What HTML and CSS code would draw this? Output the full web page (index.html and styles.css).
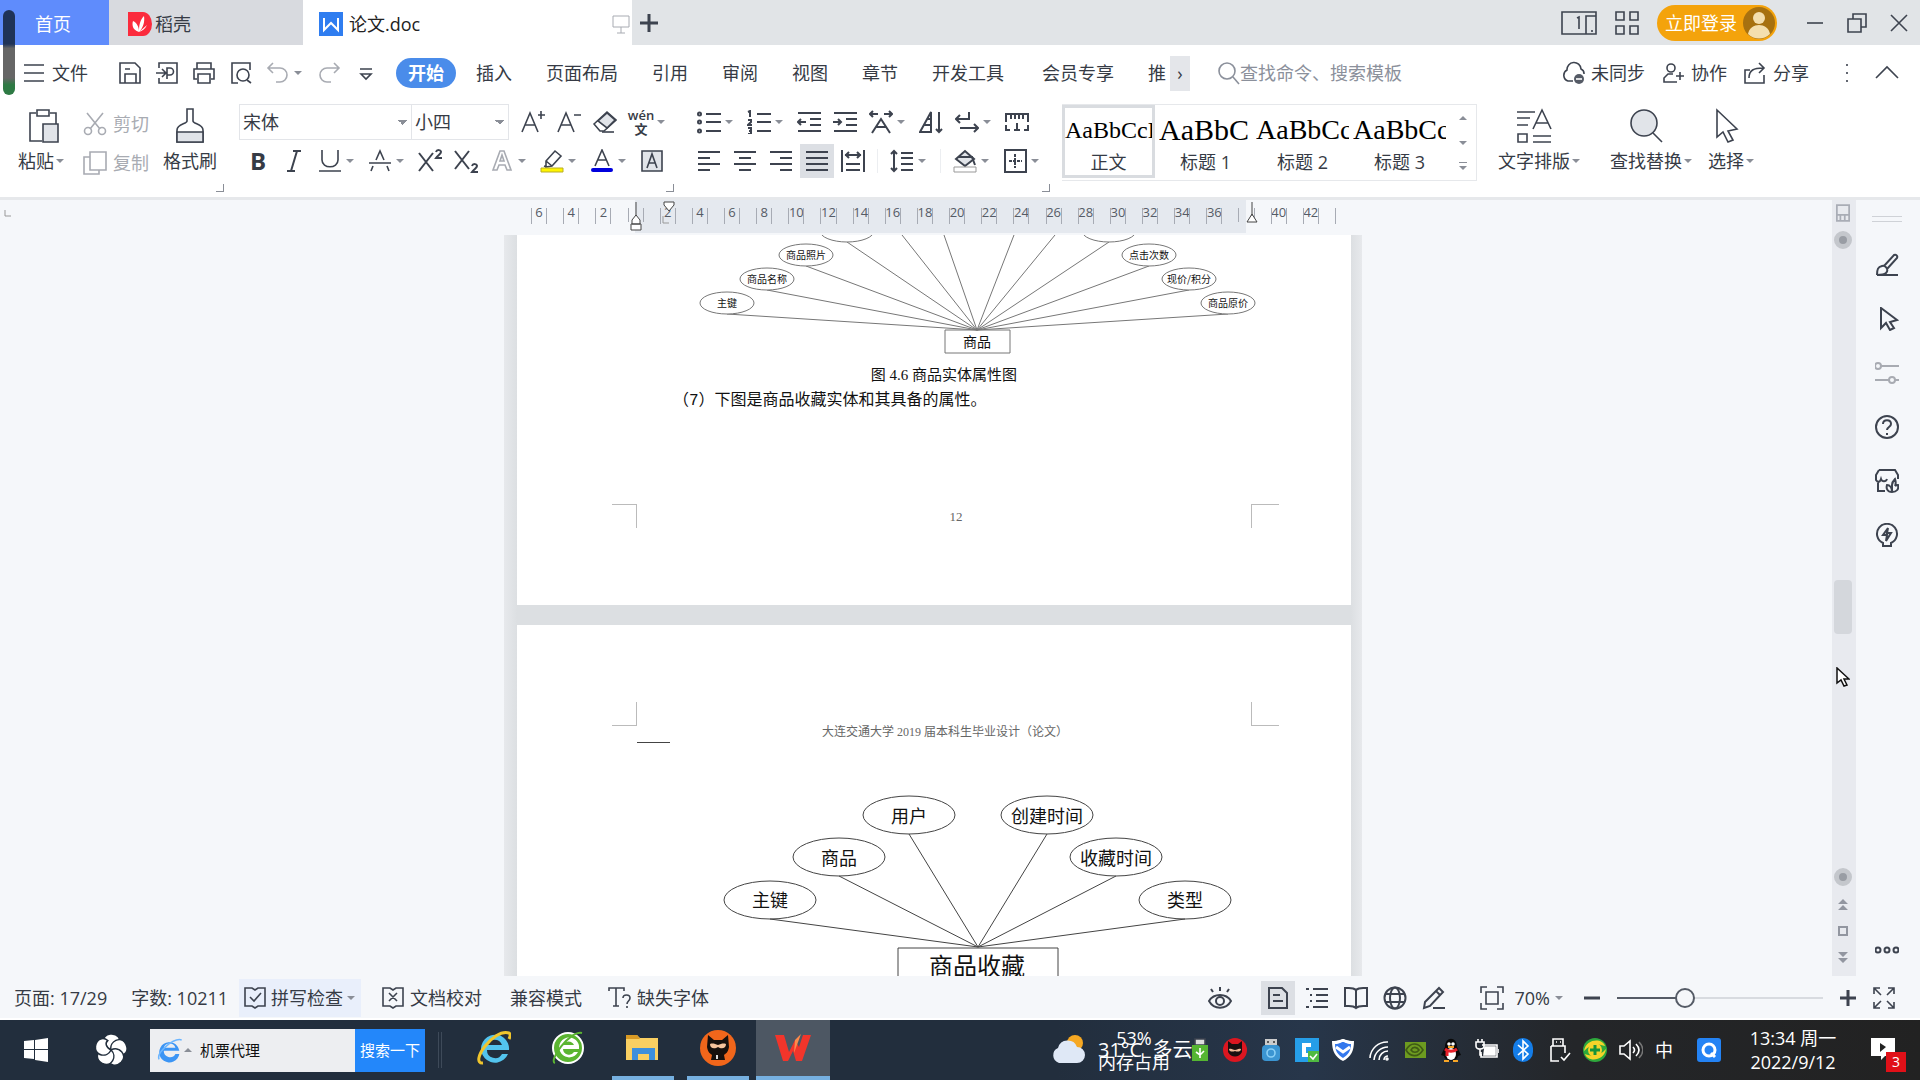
FILE: index.html
```html
<!DOCTYPE html>
<html lang="zh-CN">
<head>
<meta charset="utf-8">
<title>论文.doc</title>
<link rel="stylesheet" href="styles.css">
</head>
<body>
<svg class="sprite" aria-hidden="true">
  <symbol id="save" viewBox="0 0 24 24"><path d="M2 2h15l5 5v15H2zM7 22v-9h11v9M7 8h5"/></symbol>
  <symbol id="export" viewBox="0 0 24 24"><path d="M4 7V2h18v20H4v-5M1 12h9M7 8l4 4-4 4M12 18V7h3a3 3 0 0 1 0 7h-3"/></symbol>
  <symbol id="print" viewBox="0 0 24 24"><path d="M5 8V2h14v6M5 18H2V8h20v10h-3M6 13h12v9H6z"/></symbol>
  <symbol id="preview" viewBox="0 0 24 24"><path d="M9 22H3V2h18v7M18 19l4 3"/><circle cx="14" cy="14" r="6"/></symbol>
  <symbol id="undo" viewBox="0 0 24 24"><path d="M7 2L2 7l5 5M2 7h12a7 7 0 0 1 0 14h-4"/></symbol>
  <symbol id="redo" viewBox="0 0 24 24"><path d="M17 2l5 5-5 5M22 7H10a7 7 0 0 0 0 14h4"/></symbol>
  <symbol id="more" viewBox="0 0 24 24"><path d="M6 8h12M7 13l5 5 5-5z"/></symbol>
  <symbol id="search" viewBox="0 0 24 24"><circle cx="11" cy="10" r="8"/><path d="M17 16l6 7"/></symbol>
  <symbol id="cloud" viewBox="0 0 24 24"><path d="M12 20H7a6 6 0 0 1-1-11 7 7 0 0 1 14-1 5 5 0 0 1 3 5"/><circle cx="18" cy="18" r="5" fill="#555b66" stroke="none"/><path d="M15 18h6" stroke="#fff"/></symbol>
  <symbol id="person" viewBox="0 0 24 24"><circle cx="10" cy="7" r="4"/><path d="M16 21H3v-4l4-4h5M15 15h8M19 11v8"/></symbol>
  <symbol id="share" viewBox="0 0 24 24"><path d="M7 9H2v13h19v-8M6 17c0-8 5-10 14-10M16 2l5 5-5 5"/></symbol>
  <symbol id="paste" viewBox="0 0 36 36"><path d="M10 5H4v28h12M24 5h6v11M11 2h12v6H11z"/><path d="M17 16h15v18H17z" fill="#e1e4e9"/></symbol>
  <symbol id="cut" viewBox="0 0 24 24"><path d="M4 1l13 16M20 1L7 17"/><circle cx="5" cy="19" r="3.5"/><circle cx="19" cy="19" r="3.5"/></symbol>
  <symbol id="copy" viewBox="0 0 24 24"><path d="M7 1h16v18H7zM7 6H1v17h15v-4"/></symbol>
  <symbol id="brush" viewBox="0 0 36 36"><path d="M15 1h6v12c0 3 10 3 10 9v12H5V22c0-6 10-6 10-9z"/><path d="M5 24h26v10H5z" fill="#e1e4e9"/></symbol>
  <symbol id="grow" viewBox="0 0 24 24"><path d="M1 22L9 3l8 19M4 15h10M17 5h7M20 1v8"/></symbol>
  <symbol id="shrink" viewBox="0 0 24 24"><path d="M1 22L9 3l8 19M4 15h10M17 5h7"/></symbol>
  <symbol id="eraser" viewBox="0 0 24 24"><path d="M1 14L14 2l9 8-12 11H7z"/><path d="M5 11l9-8 8 7-8 8z" fill="#e1e4e9"/><path d="M9 22h12"/></symbol>
  <symbol id="strike" viewBox="0 0 24 24"><path d="M8 11l4-9 4 9M1 14h22M5 17l-2 5M19 17l2 5"/></symbol>
  <symbol id="hilite" viewBox="0 0 24 24"><path d="M6 12l9-10 6 5-9 10-6 1zM6 12l6 5M4 17l3 1"/><path d="M1 19h22v4H1z" fill="#fff500" stroke="#b9ad27" stroke-width="1"/></symbol>
  <symbol id="color" viewBox="0 0 24 24"><path d="M5 17L12 1l7 16M8 11h8"/><rect x="1" y="19" width="22" height="4" rx="2" fill="#00d" stroke="none"/></symbol>
  <symbol id="boxa" viewBox="0 0 24 24"><path d="M2 2h20v20H2z" fill="#e1e4e9"/><path d="M7 19l5-14 5 14M9 14h6"/></symbol>
  <symbol id="bullets" viewBox="0 0 24 24"><circle cx="2.500" cy="4" r="1.500"/><circle cx="2.500" cy="12" r="1.500"/><circle cx="2.500" cy="21" r="1.500"/><path d="M9 4h15M9 12h15M9 21h15"/></symbol>
  <symbol id="numbers" viewBox="0 0 24 24"><path d="M10 4h14M10 12h14M10 21h14M1 2l2-1v6M1 10h3v2l-3 3h4M1 18h3v6H1M2 21h2"/></symbol>
  <symbol id="outdent" viewBox="0 0 24 24"><path d="M1 3h23M13 9h11M13 15h11M1 21h23M9 12H1M4 9l-3 3 3 3"/></symbol>
  <symbol id="indent" viewBox="0 0 24 24"><path d="M1 3h23M13 9h11M13 15h11M1 21h23M0 12h8M5 9l3 3-3 3"/></symbol>
  <symbol id="scale" viewBox="0 0 24 24"><path d="M3 23l9-14 9 14M7 17h10M9 4H1M4 1L1 4l3 3M15 4h8M20 1l3 3-3 3"/></symbol>
  <symbol id="sort" viewBox="0 0 24 24"><path d="M1 22L12 2v20zM5 15h7M8 9h4M20 2v20M17 19l3 3 3-3"/></symbol>
  <symbol id="wrap" viewBox="0 0 24 24"><path d="M14 2v7H1M5 5L1 9l4 4M5 18h18M19 14l4 4-4 4"/></symbol>
  <symbol id="tabs" viewBox="0 0 24 24"><path d="M1 12V4h22v8M6 4v5M10 4v5M14 4v5M18 4v5M1 15v5h4M23 15v5h-4M12 13v7M9 20h6"/></symbol>
  <symbol id="left" viewBox="0 0 24 24"><path d="M1 3h22M1 9h12M1 15h22M1 21h12"/></symbol>
  <symbol id="center" viewBox="0 0 24 24"><path d="M1 3h22M6 9h12M1 15h22M6 21h12"/></symbol>
  <symbol id="right" viewBox="0 0 24 24"><path d="M1 3h22M11 9h12M1 15h22M11 21h12"/></symbol>
  <symbol id="justify" viewBox="0 0 24 24"><path d="M1 3h22M1 9h22M1 15h22M1 21h22"/></symbol>
  <symbol id="spread" viewBox="0 0 24 24"><path d="M1 1v22M23 1v22M5 15h14M5 21h14M4 6h16M8 3L5 6l3 3M16 3l3 3-3 3"/></symbol>
  <symbol id="spacing" viewBox="0 0 24 24"><path d="M4 2v20M1 5l3-3 3 3M1 19l3 3 3-3M11 4h12M11 9h12M11 15h12M11 21h12"/></symbol>
  <symbol id="fill" viewBox="0 0 24 24"><path d="M3 10l9-8 9 8-9 7z" fill="#e1e4e9"/><path d="M5 8h14l3 8"/><path d="M1 18h22v5H1z" stroke="#999" stroke-width="1"/></symbol>
  <symbol id="border" viewBox="0 0 24 24"><path d="M2 1h21v22H2z"/><path d="M12 5v14M6 12h13" stroke-dasharray="3 1"/></symbol>
  <symbol id="layout" viewBox="0 0 36 36"><path d="M1 4h18M1 10h13M1 17h11M17 21l9-19 9 19M20 15h12M2 26h9v8H2zM17 28h18M17 34h18"/></symbol>
  <symbol id="find" viewBox="0 0 36 36"><circle cx="16" cy="15" r="13" fill="#e1e4e9"/><path d="M25 25l9 9"/></symbol>
  <symbol id="pointer" viewBox="0 0 36 36"><path d="M9 2v27l6-5 5 10 5-2-5-9 9-2z"/></symbol>
  <symbol id="arrow24" viewBox="0 0 24 24"><path d="M6 1v20l5-5 4 7 4-2-4-6 7-2z"/></symbol>
  <symbol id="pen" viewBox="0 0 24 24"><path d="M9 13L19 2c2-1 4 1 3 3L12 16M2 22c0-6 1-8 5-9s7 4 4 7c-2 2-5 2-9 2h21"/></symbol>
  <symbol id="sliders" viewBox="0 0 24 24"><circle cx="3" cy="5" r="3"/><path d="M6 5h18M0 19h14M20 19h4"/><circle cx="17" cy="19" r="3"/></symbol>
  <symbol id="help" viewBox="0 0 24 24"><circle cx="12" cy="12" r="11"/><path d="M8 9c0-5 8-5 8 0 0 3-4 3-4 6M12 18v2"/></symbol>
  <symbol id="shop" viewBox="0 0 24 24"><path d="M4 1h16l3 5v4M4 1L1 6v5c2 3 4 2 5-1 1 3 5 3 6 0M3 13v9h7"/><path d="M17 23c-5 0-6-4-5-7 3 0 5 3 5 7 0-3 0-5 0-7 0-3 2-5 3-6 1 3 1 5 0 7 1-1 2-1 3-1 1 4-1 7-6 7"/></symbol>
  <symbol id="idea" viewBox="0 0 24 24"><path d="M8 20a10 10 0 1 1 8 0v3H8zM13 5l-5 7h4l-1 6 5-8h-4z"/></symbol>
  <symbol id="spell" viewBox="0 0 24 24"><path d="M2 2h7l3 2 3-2h7v18h-7l-3 2-3-2H2zM7 11l4 4 7-8"/></symbol>
  <symbol id="proof" viewBox="0 0 24 24"><path d="M2 2h7l3 2 3-2h7v18h-7l-3 2-3-2H2zM8 7l8 8M16 7l-8 8"/></symbol>
  <symbol id="missing" viewBox="0 0 24 24"><path d="M1 5V2h15v3M8 2v18M5 20h6M15 12c0-4 7-4 7 0 0 3-3 3-3 6M19 20v2"/></symbol>
  <symbol id="eye" viewBox="0 0 24 24"><path d="M1 15c5-8 17-8 22 0-5 9-17 9-22 0zM12 5V1M5 6L3 3M19 6l2-3"/><circle cx="12" cy="15" r="4"/></symbol>
  <symbol id="pageview" viewBox="0 0 24 24"><path d="M3 2h13l5 5v15H3zM7 9h7M7 15h10"/></symbol>
  <symbol id="outline" viewBox="0 0 24 24"><path d="M1 3h3M8 3h15M5 9h2M11 9h12M5 15h2M11 15h12M1 21h3M8 21h15"/></symbol>
  <symbol id="book" viewBox="0 0 24 24"><path d="M12 4C9 1 5 2 1 2v18c4 0 8-1 11 2 3-3 7-2 11-2V2c-4 0-8-1-11 2v18"/></symbol>
  <symbol id="globe" viewBox="0 0 24 24"><circle cx="12" cy="12" r="10.500"/><ellipse cx="12" cy="12" rx="5" ry="10.500"/><path d="M2 8h20M2 16h20"/></symbol>
  <symbol id="pencil" viewBox="0 0 24 24"><path d="M3 16L17 2l4 4L8 20l-6 2zM14 5l4 4M11 22h12"/></symbol>
  <symbol id="fit" viewBox="0 0 24 24"><path d="M1 7V1h6M17 1h6v6M23 17v6h-6M7 23H1v-6M6 6h12v12H6z"/></symbol>
  <symbol id="full" viewBox="0 0 24 24"><path d="M2 8V2h6M2 2l7 7M16 2h6v6M22 2l-7 7M22 16v6h-6M22 22l-7-7M8 22H2v-6M2 22l7-7"/></symbol>
  <symbol id="petal" viewBox="0 0 34 34"><path d="M17 17C8 16 6 3 16 1c8-1 11 5 9 10-3-2-7 0-8 6z" fill="#fff" stroke="#222e3c" stroke-width="1.500"/></symbol>
</svg>

<header class="titlebar">
  <button class="tab home">首页</button>
  <button class="tab docer"><svg class="ic" viewBox="0 0 24 24"><path d="M0 0h15a9 12 0 0 1 0 24H0z" fill="#fb2b3d" stroke="none"/><path d="M11 20C4 18 4 12 5 9c4 2 6 6 6 11 0-7 1-12 5-16 1 6-1 12-5 16 3-1 6-3 8-7" fill="#fff" stroke="none"/></svg>稻壳</button>
  <div class="tab doc"><svg class="ic" viewBox="0 0 24 24"><path d="M0 0h24v24H0z" fill="#2f7df0" stroke="none"/><path d="M5 6v12l7-7 7 7V6" stroke="#fff"/></svg><span>论文.doc</span><svg class="ic pale screen" viewBox="0 0 24 24"><path d="M5 4h16v11H5zM13 15v6M9 21h8"/></svg></div>
  <button class="addtab" aria-label="新建"><svg class="ic bold" viewBox="0 0 24 24"><path d="M12 3v18M3 12h18"/></svg></button>
  <div class="titletools">
    <svg class="ic wide" viewBox="0 0 36 24"><path d="M1 1h34v22H1zM25 23V5h10M16 7l2-1v12M31 19v2"/></svg>
    <svg class="ic" viewBox="0 0 24 24"><path d="M1 1h8v8H1zM15 1h8v8h-8zM1 15h8v8H1zM15 15h8v8h-8z"/></svg>
    <button class="login">立即登录<svg class="avatar" viewBox="0 0 32 32"><circle cx="16" cy="16" r="16" fill="#a77110"/><circle cx="16" cy="11" r="6" fill="#f4dfae"/><path d="M5 27c2-12 20-12 22 0-6 6-16 6-22 0z" fill="#f4dfae"/></svg></button>
  </div>
  <div class="wincontrols">
    <svg class="ic" viewBox="0 0 24 24"><path d="M4 12h16"/></svg>
    <svg class="ic" viewBox="0 0 24 24"><path d="M3 8h13v13H3zM8 8V3h13v13h-5"/></svg>
    <svg class="ic" viewBox="0 0 24 24"><path d="M4 4l16 16M20 4L4 20"/></svg>
  </div>
</header>

<nav class="menubar">
  <button class="filemenu"><svg class="ic" viewBox="0 0 24 24"><path d="M2 4h20M2 12h20M2 20h20"/></svg>文件</button>
  <div class="quick">
    <svg class="ic"><use href="#save"/></svg><svg class="ic"><use href="#export"/></svg><svg class="ic"><use href="#print"/></svg><svg class="ic"><use href="#preview"/></svg>
    <button class="dd pale"><svg class="ic"><use href="#undo"/></svg></button>
    <svg class="ic pale"><use href="#redo"/></svg><svg class="ic"><use href="#more"/></svg>
  </div>
  <button class="pill">开始</button>
  <div class="menus">
    <button>插入</button><button>页面布局</button><button>引用</button><button>审阅</button><button>视图</button><button>章节</button><button class="dev">开发工具</button><button class="member">会员专享</button><button>推</button>
  </div>
  <button class="chev">›</button>
  <label class="find"><svg class="ic"><use href="#search"/></svg><input placeholder="查找命令、搜索模板"></label>
  <div class="cloudtools">
    <button><svg class="ic"><use href="#cloud"/></svg>未同步</button>
    <button><svg class="ic"><use href="#person"/></svg>协作</button>
    <button><svg class="ic"><use href="#share"/></svg>分享</button>
  </div>
  <svg class="ic dots" viewBox="0 0 24 24"><path d="M12 3v2M12 11v2M12 19v2"/></svg>
  <svg class="ic" viewBox="0 0 24 24"><path d="M1 17L12 6l11 11"/></svg>
</nav>

<section class="ribbon">
  <div class="group clip">
    <button class="big"><svg class="ic36"><use href="#paste"/></svg><span class="cap more">粘贴</span></button>
    <div class="stack pale"><button><svg class="ic"><use href="#cut"/></svg>剪切</button><button><svg class="ic"><use href="#copy"/></svg>复制</button></div>
    <button class="big"><svg class="ic36"><use href="#brush"/></svg><span class="cap">格式刷</span></button>
  </div>
  <div class="group fontgroup">
    <div class="row">
      <div class="combo"><select class="family" aria-label="字体"><option>宋体</option></select><select class="size" aria-label="字号"><option>小四</option></select></div>
      <svg class="ic"><use href="#grow"/></svg><svg class="ic"><use href="#shrink"/></svg><svg class="ic"><use href="#eraser"/></svg>
      <button class="dd"><span class="wen"><i>wén</i><i>文</i></span></button>
    </div>
    <div class="row tools">
      <button class="glyph b">B</button><button class="glyph"><svg class="ic" viewBox="0 0 24 24"><path d="M11 2h8M5 22h8M15 2L9 22"/></svg></button>
      <button class="dd"><svg class="ic" viewBox="0 0 24 24"><path d="M4 1v10c0 9 16 9 16 0V1M1 22h22"/></svg></button>
      <button class="dd"><svg class="ic"><use href="#strike"/></svg></button>
      <button class="glyph" aria-label="上标"><svg class="ic" viewBox="0 0 24 24"><path d="M1 4l14 18M15 4L1 22M18 3c1-3 5-2 5 0s-3 3-5 6h6"/></svg></button>
      <button class="glyph" aria-label="下标"><svg class="ic" viewBox="0 0 24 24"><path d="M1 2l14 18M15 2L1 20M18 17c1-3 5-2 5 0s-3 3-5 6h6"/></svg></button>
      <button class="dd pale"><svg class="ic" viewBox="0 0 24 24"><path d="M3 21L10 2h4l7 19h-4l-2-5H9l-2 5zM10 12h4l-2-6z"/></svg></button>
      <button class="dd"><svg class="ic"><use href="#hilite"/></svg></button>
      <button class="dd"><svg class="ic"><use href="#color"/></svg></button>
      <svg class="ic"><use href="#boxa"/></svg>
    </div>
  </div>
  <div class="group para">
    <div class="row">
      <button class="dd"><svg class="ic"><use href="#bullets"/></svg></button><button class="dd"><svg class="ic"><use href="#numbers"/></svg></button>
      <svg class="ic"><use href="#outdent"/></svg><svg class="ic"><use href="#indent"/></svg>
      <button class="dd"><svg class="ic"><use href="#scale"/></svg></button><svg class="ic"><use href="#sort"/></svg>
      <button class="dd"><svg class="ic"><use href="#wrap"/></svg></button><svg class="ic"><use href="#tabs"/></svg>
    </div>
    <div class="row">
      <svg class="ic"><use href="#left"/></svg><svg class="ic"><use href="#center"/></svg><svg class="ic"><use href="#right"/></svg>
      <svg class="ic on"><use href="#justify"/></svg><svg class="ic"><use href="#spread"/></svg>
      <span class="sep"></span><button class="dd"><svg class="ic"><use href="#spacing"/></svg></button>
      <span class="sep"></span><button class="dd"><svg class="ic"><use href="#fill"/></svg></button>
      <button class="dd"><svg class="ic"><use href="#border"/></svg></button>
    </div>
  </div>
  <div class="gallery">
    <button class="style sel"><span class="sample">AaBbCcD</span>正文</button>
    <button class="style"><span class="sample h1">AaBbC</span>标题 1</button>
    <button class="style"><span class="sample h2">AaBbCc</span>标题 2</button>
    <button class="style"><span class="sample h2">AaBbCc</span>标题 3</button>
    <div class="galscroll"><i class="up"></i><i class="dn"></i><i class="dn line"></i></div>
  </div>
  <button class="big typeset"><svg class="ic36"><use href="#layout"/></svg><span class="cap more">文字排版</span></button>
  <button class="big replace"><svg class="ic36"><use href="#find"/></svg><span class="cap more">查找替换</span></button>
  <button class="big choose"><svg class="ic36"><use href="#pointer"/></svg><span class="cap more">选择</span></button>
</section>

<main class="workspace">
  <svg class="corner" viewBox="0 0 8 8"><path d="M1 0v6h6" fill="none" stroke="#999"/></svg>
  <div class="canvas">
    <div class="ruler">
      <span>6</span><span>4</span><span>2</span><span class="mark"></span><span class="in">2</span><span class="in">4</span><span class="in">6</span><span class="in">8</span><span class="in">10</span><span class="in">12</span><span class="in">14</span><span class="in">16</span><span class="in">18</span><span class="in">20</span><span class="in">22</span><span class="in">24</span><span class="in">26</span><span class="in">28</span><span class="in">30</span><span class="in">32</span><span class="in">34</span><span class="in">36</span><span class="mark"></span><span>40</span><span>42</span>
      <svg class="stops" viewBox="523 200 814 35"><path d="M636 202v14M632 220l4-5 4 5v4h-8zM631 224h10v6h-10zM1252 202v14M1247 222l5-8 5 8zM664 202h10v3l-5 6-5-6z" fill="#fff" stroke="#444"/><path d="M663 216v7h6" fill="none" stroke="#999"/><path d="M1335.500 208v16" stroke="#a7abb4"/></svg>
    </div>
    <div class="pages">
      <article class="page first">
        <svg class="diagram small" viewBox="517 235 834 120">
          <path d="M727 314L977 330 767 290M806 266L977 330 847 242M902 235L977 330 944 235M1014 235L977 330 1055 235M1109 242L977 330 1149 266M1189 290L977 330 1228 314M945 330h65v23h-65z"/>
          <g><ellipse cx="727" cy="303" rx="27" ry="11"/><ellipse cx="767" cy="279" rx="27" ry="11"/><ellipse cx="806" cy="255" rx="27" ry="11"/><ellipse cx="847" cy="231" rx="27" ry="11"/><ellipse cx="1109" cy="231" rx="27" ry="11"/><ellipse cx="1149" cy="255" rx="27" ry="11"/><ellipse cx="1189" cy="279" rx="27" ry="11"/><ellipse cx="1228" cy="303" rx="27" ry="11"/></g>
          <text x="727" y="307">主键</text><text x="767" y="283">商品名称</text><text x="806" y="259">商品照片</text><text x="1149" y="259">点击次数</text><text x="1189" y="283">现价/积分</text><text x="1228" y="307">商品原价</text><text class="root" x="977" y="347">商品</text>
        </svg>
        <p class="figcap">图 4.6 商品实体属性图</p>
        <p class="para-text">（7）下图是商品收藏实体和其具备的属性。</p>
        <footer class="margins bottom"><i></i><span>12</span><i></i></footer>
      </article>
      <article class="page">
        <div class="margins top"><i></i><i></i></div>
        <p class="pagehead">大连交通大学 2019 届本科生毕业设计（论文）</p>
        <hr class="note">
        <svg class="diagram" viewBox="517 743 834 300">
          <path d="M770 919L978 947 839 876M909 834L978 947 1047 834M1116 876L978 947 1185 919M898 948h160v60h-160z"/>
          <ellipse cx="909" cy="815" rx="46" ry="19"/><ellipse cx="1047" cy="815" rx="46" ry="19"/><ellipse cx="839" cy="857" rx="46" ry="19"/><ellipse cx="1116" cy="857" rx="46" ry="19"/><ellipse cx="770" cy="900" rx="46" ry="19"/><ellipse cx="1185" cy="900" rx="46" ry="19"/>
          <text x="909" y="823">用户</text><text x="1047" y="823">创建时间</text><text x="839" y="865">商品</text><text x="1116" y="865">收藏时间</text><text x="770" y="907">主键</text><text x="1185" y="907">类型</text><text class="root" x="977" y="975">商品收藏</text>
        </svg>
      </article>
    </div>
  </div>
  <div class="vscroll">
    <svg class="rulertoggle" viewBox="0 0 16 20"><path d="M1 1h14v18H1zM1 12h14M5 12v7M10 12v7" fill="none" stroke="#a9adb6" stroke-width="2"/></svg>
    <i class="knob"></i><i class="thumb"></i>
    <svg class="mouse" viewBox="0 0 14 20"><path d="M1 1v15l4-3 3 6 3-1-3-6h5z" fill="#fff" stroke="#111" stroke-width="1.500"/></svg>
    <i class="knob low"></i>
    <svg class="pager" viewBox="0 0 14 70"><path d="M2 10l5-5 5 5zM2 16l5-5 5 5zM2 58l5 5 5-5zM2 64l5 5 5-5z" fill="#9296a0"/><path d="M3 33h8v8H3z" fill="none" stroke="#9296a0" stroke-width="2"/></svg>
  </div>
  <aside class="side">
    <i class="grip"></i>
    <svg class="ic"><use href="#pen"/></svg><svg class="ic"><use href="#arrow24"/></svg><svg class="ic pale"><use href="#sliders"/></svg><svg class="ic"><use href="#help"/></svg><svg class="ic"><use href="#shop"/></svg><svg class="ic"><use href="#idea"/></svg>
    <svg class="ic last" viewBox="0 0 24 24"><circle cx="3" cy="12" r="2.500"/><circle cx="12" cy="12" r="2.500"/><circle cx="21" cy="12" r="2.500"/></svg>
  </aside>
</main>

<footer class="status">
  <span class="pageno">页面: 17/29</span><span class="words">字数: 10211</span>
  <button class="dd spellbtn"><svg class="ic"><use href="#spell"/></svg>拼写检查</button>
  <button class="proofbtn"><svg class="ic"><use href="#proof"/></svg>文档校对</button>
  <span class="compat">兼容模式</span>
  <button class="missbtn"><svg class="ic"><use href="#missing"/></svg>缺失字体</button>
  <div class="views">
    <svg class="ic eye"><use href="#eye"/></svg><svg class="ic on"><use href="#pageview"/></svg><svg class="ic"><use href="#outline"/></svg><svg class="ic"><use href="#book"/></svg><svg class="ic"><use href="#globe"/></svg><svg class="ic"><use href="#pencil"/></svg>
  </div>
  <svg class="ic"><use href="#fit"/></svg>
  <button class="dd zoomval">70%</button>
  <div class="zoom"><svg class="ic bold" viewBox="0 0 24 24"><path d="M4 12h16"/></svg><input type="range" min="0" max="100" value="31" aria-label="缩放"><svg class="ic bold" viewBox="0 0 24 24"><path d="M4 12h16M12 4v16"/></svg></div>
  <svg class="ic"><use href="#full"/></svg>
</footer>

<div class="taskbar">
  <svg class="ic start" viewBox="0 0 24 24"><path d="M0 3l10-1v9H0zM11 2l13-2v11H11zM0 12h10v9L0 20zM11 12h13v12l-13-2z" fill="#fff" stroke="none"/></svg>
  <svg class="flower" viewBox="0 0 34 34"><use href="#petal"/><use href="#petal" transform="rotate(72 17 17)"/><use href="#petal" transform="rotate(144 17 17)"/><use href="#petal" transform="rotate(216 17 17)"/><use href="#petal" transform="rotate(288 17 17)"/></svg>
  <div class="seek"><svg class="ie" viewBox="0 0 36 36"><path d="M30 19H10a8 8 0 0 0 15 4h5a13 13 0 1 1 0-4zM10 15h15a8 8 0 0 0-15 0z" fill="#3c95f5"/><path d="M4 30C0 22 22 2 33 5" fill="none" stroke="#6bb5ff" stroke-width="2"/></svg><i class="up"></i><input aria-label="搜索" value="机票代理"><button>搜索一下</button></div>
  <i class="split"></i>
  <div class="apps">
    <span><svg class="ie" viewBox="0 0 36 36"><path d="M34 20H12a8 8 0 0 0 15 4h6a14 14 0 1 1 1-4zM12 15h15a8 8 0 0 0-15 0z" fill="#53c4ee"/><path d="M8 33C-6 34 18-2 34 3c2 1 1 4 0 6" fill="none" stroke="#f0c52c" stroke-width="3"/></svg></span>
    <span><svg class="ie" viewBox="0 0 36 36"><circle cx="18" cy="18" r="15" fill="#5bb531" stroke="#fff" stroke-width="2"/><path d="M29 19H13a6 6 0 0 0 11 3h4a10 10 0 1 1 1-3zM13 15h11a6 6 0 0 0-11 0z" fill="#fff"/><path d="M5 33C-2 31 20 0 32 3" fill="none" stroke="#5bb531" stroke-width="2"/></svg></span>
    <span class="open"><svg class="ie" viewBox="0 0 36 36"><path d="M1 5h11l3 3h18v22H1z" fill="#f9cf62"/><path d="M1 5h11l3 4H1z" fill="#d99a24"/><path d="M7 30V18h23v12h-6v-6H13v6z" fill="#3d8fdc"/></svg></span>
    <span class="open"><svg class="ie" viewBox="0 0 36 36"><circle cx="18" cy="18" r="18" fill="#f1661b"/><path d="M8 5l6 5h8l6-5 1 12c-1 6-4 7-5 8l1 5H11l1-5c-1-1-4-2-5-8z" fill="#17100d"/><path d="M10 14c3-1 5 0 8 1 3-1 5-2 8-1 0 5-5 5-8 3-3 2-8 2-8-3z" fill="#f5c39c"/><path d="M17 25v4" stroke="#ddd" stroke-width="2"/></svg></span>
    <span class="open active"><svg class="ie" viewBox="0 0 36 36"><path d="M0 5h9l5 17 6-12 4 7 4-12h8l-9 26h-6l-3-10-5 10H8z" fill="#f2352b"/><path d="M20 10l6-6-7 19z" fill="#ff8a4a"/></svg></span>
  </div>
  <div class="weather"><svg viewBox="0 0 34 34"><circle cx="24" cy="10" r="8" fill="#f6a823"/><path d="M8 30a8 8 0 0 1-1-15 10 10 0 0 1 19-1 8 8 0 0 1 0 16z" fill="#dfe8f6"/></svg>
    <div class="overlay"><span class="temp">31°C&nbsp; 多云</span><span class="mem">53%<br>内存占用</span></div></div>
  <div class="tray">
    <svg class="ic" viewBox="0 0 24 24"><path d="M8 1h10v6H8z" fill="#ddd"/><path d="M5 7h16v16H5z" fill="#55b532" stroke="none"/><path d="M13 10v10M9 14l4 3 4-4" stroke="#fff"/></svg>
    <svg class="ic" viewBox="0 0 24 24"><circle cx="12" cy="12" r="12" fill="#dc1620" stroke="none"/><path d="M5 3l4 3h6l4-3v11c-3 6-11 6-14 0z" fill="#1a1010" stroke="none"/><path d="M6 11c3-1 4 1 6 1s3-2 6-1c0 3-4 3-6 2-2 1-6 1-6-2z" fill="#f3bb98" stroke="none"/></svg>
    <svg class="ic" viewBox="0 0 24 24"><path d="M6 1h12v6H6z" fill="#ccc" stroke="none"/><rect x="3" y="7" width="18" height="16" rx="4" fill="#3b95d2" stroke="none"/><path d="M8 4h2M14 4h2" stroke="#333"/><circle cx="12" cy="15" r="4" stroke="#8bd0f6"/></svg>
    <svg class="ic" viewBox="0 0 24 24"><path d="M0 0h24v24H0z" fill="#269ee8" stroke="none"/><path d="M16 7H9v10h7" stroke="#fff" stroke-width="4"/><path d="M13 13h11v11H13z" fill="#4fba41" stroke="none"/><path d="M15 18l3 3 4-5" stroke="#fff"/></svg>
    <svg class="ic" viewBox="0 0 24 24"><path d="M1 3c7 0 9-2 11-2s4 2 11 2c0 10-3 16-11 20C4 19 1 13 1 3z" fill="#fff" stroke="none"/><path d="M4 6c5 0 6-2 8-2s3 2 8 2c0 7-3 11-8 14-5-3-8-7-8-14z" fill="#3478ed" stroke="none"/><path d="M5 9l7 5 7-5" stroke="#fff" stroke-width="3"/></svg>
    <svg class="ic lite" viewBox="0 0 24 24"><path d="M3 20A17 17 0 0 1 21 4M7 22A14 14 0 0 1 21 9M12 22a9 9 0 0 1 9-9M17 22a4 4 0 0 1 4-4"/><circle cx="20" cy="21" r="1"/></svg>
    <svg class="ic" viewBox="0 0 24 24"><path d="M2 4h21v16H2z" fill="#6d9b20" stroke="none"/><path d="M3 12c5-9 13-7 17 0-5 8-13 7-17 0zM8 12c2-4 6-3 8 0-2 3-6 3-8 0z" stroke="#3f5a14"/></svg>
    <svg class="ic" viewBox="0 0 24 24"><path d="M6 9c0-11 12-11 12 0l4 8-3 1c-1 6-13 6-14 0l-3-1z" fill="#090909" stroke="none"/><ellipse cx="12" cy="16" rx="5" ry="6" fill="#fff" stroke="none"/><path d="M6 11c4 3 8 3 12 0M8 13v5" stroke="#e6202a" stroke-width="3"/><circle cx="10" cy="6" r="1" fill="#fff" stroke="#fff"/><circle cx="14" cy="6" r="1" fill="#fff" stroke="#fff"/><path d="M5 23h5M14 23h5M9 9h6" stroke="#f7a526" stroke-width="2"/></svg>
    <svg class="ic lite" viewBox="0 0 24 24"><path d="M7 7h15v12H6v-5" /><path d="M10 9h10v8H9z" fill="#fff"/><path d="M24 11v4M1 4h8v4c0 4-8 4-8 0zM3 4V1M7 4V1M5 11v6h2"/></svg>
    <svg class="ic" viewBox="0 0 24 24"><rect x="2" width="20" height="24" rx="10" fill="#147de8" stroke="none"/><path d="M7 7l10 9-5 5V3l5 5-10 9" stroke="#fff"/></svg>
    <svg class="ic lite" viewBox="0 0 24 24"><path d="M6 1h10v7H6zM4 8h14v7M4 8v15h8M14 19l3 3 6-7M9 4h1M13 4h1"/></svg>
    <svg class="ic" viewBox="0 0 24 24"><circle cx="12" cy="12" r="12" fill="#2ea83c" stroke="none"/><path d="M1 13C3 0 20 0 22 8c-8-3-15-2-21 5zM23 11c-2 13-19 13-21 5 8 3 15 2 21-5z" fill="#f5d32a" stroke="none"/><circle cx="12" cy="12" r="7" fill="#f5d32a" stroke="none"/><path d="M12 7v10M7 12h10" stroke="#16933a" stroke-width="3"/></svg>
    <svg class="ic lite" viewBox="0 0 24 24"><path d="M1 8h4l6-5v18l-6-5H1zM14 9c2 2 2 4 0 6M17 6c4 4 4 8 0 12"/><path d="M20 4c5 5 5 11 0 16" stroke="#777"/></svg>
    <span class="ime">中</span>
  </div>
  <svg class="ic qapp" viewBox="0 0 24 24"><rect width="24" height="24" rx="3" fill="#2483f4" stroke="none"/><circle cx="12" cy="12" r="6" stroke="#fff" stroke-width="3"/><path d="M14 15l4 4" stroke="#fff" stroke-width="3"/></svg>
  <div class="clock">13:34 周一<br>2022/9/12</div>
  <div class="notify"><svg viewBox="0 0 26 24"><path d="M1 1h24v18H15l-4 4v-4H1z" fill="#fff"/><path d="M10 6l6 4-6 5z" fill="#222"/></svg><b>3</b></div>
</div>
<div class="handle"></div>
</body>
</html>
```
FILE: styles.css
```css
* { box-sizing: border-box; }
body {
  margin: 0; height: 100vh; display: flex; flex-direction: column; overflow: hidden;
  font: 18px/24px "Open Sans", "Noto Sans CJK SC", sans-serif; color: #363b45; background: #f5f7fa;
}
button, input, select { font: inherit; color: inherit; border: 0; background: none; padding: 0; margin: 0; white-space: nowrap; }
p { margin: 0; }
svg { flex: none; display: block; }
.sprite { position: absolute; width: 0; height: 0; }
.ic { width: 24px; height: 24px; }
.ic36 { width: 36px; height: 36px; }
.ic, .ic36 { fill: none; stroke: #3d434f; stroke-width: 1.6; }
.pale, .pale .ic { color: #a8abb2; stroke: #a8abb2; }
.ic.bold { stroke-width: 3; }
.wide { width: 36px; }
.dd { display: flex; align-items: center; gap: 4px; }
.dd::after, .more::after {
  content: ""; border: 4px solid transparent; border-top-color: #8a8e97; border-bottom: 0; margin-right: 2px;
}

/* title bar */
.titlebar { display: flex; height: 45px; background: #e1e4e7; flex: none; }
.tab { display: flex; align-items: center; padding-bottom: 6px; padding-top: 8px; }
.tab .ic { stroke-width: 2; }
.home { width: 109px; padding-left: 35px; background: #5f8cfc; color: #fff; }
.docer { width: 194px; padding-left: 19px; gap: 3px; background: #d8dadf; }
.doc { width: 329px; padding-left: 16px; gap: 6px; background: #fff; color: #222; }
.tab .screen { margin-left: auto; stroke-width: 1; }
.addtab { width: 34px; display: grid; place-items: center; }
.titletools { margin-left: auto; display: flex; align-items: center; gap: 18px; }
.login { display: flex; align-items: center; gap: 6px; height: 36px; padding: 0 2px 0 8px; border-radius: 18px; background: #f4a30c; color: #fff; }
.avatar { width: 32px; height: 32px; }
.wincontrols { display: flex; align-items: center; gap: 18px; margin: 0 9px 0 26px; }

/* menu row */
.menubar { display: flex; align-items: center; height: 56px; background: #fff; padding: 0 21px 0 22px; flex: none; }
.filemenu { display: flex; align-items: center; gap: 6px; }
.quick { display: flex; align-items: center; gap: 13px; margin-left: 30px; }
.pill { width: 60px; height: 30px; margin-left: 18px; border-radius: 15px; background: #4a8cea; color: #fff; font-weight: 700; }
.menus { display: flex; gap: 34px; margin-left: 20px; }
.member { margin-left: 4px; }
.chev { width: 20px; height: 35px; margin-left: 4px; background: #e4e6ea; }
.find { display: flex; align-items: center; margin-left: 26px; color: #8b909b; }
.find .ic { stroke: #8b909b; }
.find input { width: 180px; }
.find input::placeholder { color: #8b909b; opacity: 1; }
.cloudtools { display: flex; gap: 16px; margin-left: auto; }
.cloudtools button { display: flex; align-items: center; gap: 6px; }
.dots { margin: 0 16px 0 26px; }

/* ribbon */
.ribbon { display: flex; height: 99px; background: #fff; border-bottom: 3px solid #e6e8eb; padding-top: 3px; flex: none; }
.group { position: relative; height: 90px; }
.group::after { content: ""; position: absolute; right: 1px; bottom: 2px; width: 7px; height: 7px; border: solid #8a8e97; border-width: 0 1px 1px 0; }
.big { display: flex; flex-direction: column; align-items: center; gap: 5px; height: 72px; padding-top: 4px; }
.cap { display: flex; align-items: center; }
.more::after { margin: 0 -10px 0 2px; }
.clip { display: flex; width: 225px; padding-left: 18px; gap: 14px; }
.clip .big:first-child { width: 50px; align-items: flex-start; }
.clip .big:first-child .ic36 { margin-left: 8px; }
.stack { display: flex; flex-direction: column; padding-left: 1px; }
.stack button { display: flex; align-items: center; gap: 6px; height: 39px; }
.row { display: flex; align-items: center; height: 36px; gap: 12px; margin-bottom: 3px; }
.fontgroup { width: 450px; padding-left: 14px; }
.tools { padding-left: 7px; }
.combo { display: flex; width: 270px; height: 36px; border: 1px solid #e3e5e9; }
select { appearance: none; }
.combo select { padding-left: 3px; background: linear-gradient(45deg, transparent 50%, #8a8e97 50%) right 8px center / 5px 5px no-repeat, linear-gradient(315deg, transparent 50%, #8a8e97 50%) right 3px center / 5px 5px no-repeat; }
.family { width: 172px; border-right: 1px solid #e3e5e9; }
.size { flex: 1; }
.wen { width: 24px; display: flex; flex-direction: column; align-items: center; font-size: 13px; line-height: 14px; font-weight: 600; }
.wen i { font-style: normal; }
.glyph { width: 24px; height: 30px; line-height: 30px; display: flex; align-items: center; justify-content: center; }
.glyph.b { font-weight: 700; font-size: 24px; }
.para { width: 376px; padding-left: 22px; }
.para .ic, .views .ic, .glyph .ic { stroke-width: 2; }
.on { outline: 5px solid #dcdfe4; background: #dcdfe4; }
.sep { width: 1px; height: 24px; background: #eceef1; }
.gallery { display: flex; gap: 4px; height: 77px; margin-left: 11px; border: 1px solid #e6e8eb; border-left: 0; width: 415px; }
.style { width: 93px; display: flex; flex-direction: column; align-items: center; justify-content: flex-end; padding-bottom: 4px; height: 73px; overflow: hidden; }
.sel { border: 3px solid #d9dce0; padding-bottom: 1px; }
.sample { width: 100%; overflow: hidden; font: 24px/36px "Liberation Serif", serif; color: #000; text-align: left; margin-bottom: 2px; }
.sample.h1 { font-size: 30px; }
.sample.h2 { font-size: 28px; }
.galscroll { display: flex; flex-direction: column; justify-content: space-around; align-items: center; flex: 1; }
.up, .dn { border: 4px solid transparent; }
.up { border-bottom-color: #8a8e97; border-top: 0; }
.dn { border-top-color: #8a8e97; border-bottom: 0; }
.line { position: relative; }
.line::before { content: ""; position: absolute; left: -4px; top: -8px; width: 8px; height: 1px; background: #8a8e97; }
.typeset { margin-left: 21px; }
.replace { margin-left: 40px; }
.choose { margin-left: 26px; }

/* document area */
.workspace { position: relative; display: flex; flex: 1; min-height: 0; overflow: hidden; }
.corner { position: absolute; left: 4px; top: 10px; width: 8px; height: 8px; }
.canvas { flex: 1; padding-left: 36px; display: flex; flex-direction: column; align-items: center; min-height: 0; }
.ruler { position: relative; display: flex; width: 804px; height: 35px; margin-right: 18px; flex: none; font-size: 13px; line-height: 24px; text-align: center; color: #555b66; }
.ruler span { flex: 1; height: 35px; position: relative; }
.ruler span::before { content: ""; position: absolute; top: 8px; bottom: 11px; left: 25%; right: 25%; border: solid #a7abb4; border-width: 0 1px; }
.ruler .in { background: #e5e9ef; height: 33px; }
.ruler .in::before { bottom: 9px; }
.ruler .mark { height: 33px; }
.ruler .mark:nth-child(4) { background: linear-gradient(90deg, transparent 50%, #e5e9ef 50%); }
.ruler .mark:nth-child(23) { background: linear-gradient(90deg, #e5e9ef 50%, transparent 50%); }
.stops { position: absolute; left: 0; top: 0; width: 814px; height: 35px; }
.pages { background: linear-gradient(90deg, #e7e9ec, #dcdfe2 13px calc(100% - 11px), #e7e9ec); padding: 0 11px 0 13px; margin-right: 2px; }
.page { width: 834px; background: #fff; display: flex; flex-direction: column; }
.first { height: 370px; margin-bottom: 20px; }
.diagram { width: 100%; fill: none; stroke: #444; stroke-width: 1; }
.diagram text { fill: #111; stroke: none; text-anchor: middle; font: 18px "Noto Sans CJK SC", sans-serif; }
.diagram .root { font-size: 24px; }
.small { stroke: #777; }
.small ellipse { fill: #fff; }
.diagram.small text { font-size: 10px; }
.diagram.small .root { font-size: 14px; }
.figcap { text-align: center; padding: 8px 0 0 20px; font: 15px/24px "Liberation Serif", "Noto Sans CJK SC", serif; color: #111; }
.para-text { padding: 2px 0 0 156px; font: 16px/24px "Liberation Mono", "Noto Sans CJK SC", monospace; color: #111; }
.margins { display: flex; justify-content: space-between; padding: 0 72px 0 95px; height: 24px; font: 13px/26px "Liberation Serif", serif; color: #666; }
.margins i { width: 25px; border: 0 solid #bbb; }
.bottom { margin: auto 0 77px; }
.bottom span { padding-left: 24px; }
.bottom i { border-top-width: 1px; }
.top { margin-top: 77px; }
.top i { border-bottom-width: 1px; }
.margins i:first-child { border-right-width: 1px; }
.margins i:last-child { border-left-width: 1px; width: 28px; }
.pagehead { margin-top: -2px; padding-left: 22px; text-align: center; font: 12px/16px "Liberation Serif", "Noto Sans CJK SC", serif; color: #666; }
.note { width: 33px; margin: 2px 0 0 120px; border: 0; border-top: 1px solid #444; }
.vscroll { width: 24px; background: #e8eaef; display: flex; flex-direction: column; align-items: center; padding: 4px 2px 0 0; }
.rulertoggle { width: 14px; height: 18px; }
.knob { width: 18px; height: 18px; border-radius: 9px; margin-top: 9px; border: 5px solid #c4c7cc; background: #999da4; }
.thumb { width: 18px; height: 54px; border-radius: 4px; background: #d4d7dc; margin-top: 331px; }
.mouse { width: 14px; height: 20px; margin-top: 33px; }
.low { margin-top: auto; }
.pager { width: 14px; height: 70px; margin: 8px 0 12px; }
.side { width: 64px; display: flex; flex-direction: column; align-items: center; gap: 30px; padding: 16px 2px 14px 0; }
.side .ic { stroke-width: 2; }
.grip { width: 30px; height: 6px; border: solid #cfd2d7; border-width: 1px 0; margin-bottom: 1px; }
.last { margin-top: auto; }

/* status bar */
.status { display: flex; align-items: center; height: 44px; padding: 2px 24px 0 14px; flex: none; border-bottom: 2px solid #fff; }
.status button { display: flex; align-items: center; gap: 5px; height: 38px; }
.words { margin-left: 24px; }
.status .spellbtn { background: #e9effb; padding: 0 4px; margin-left: 11px; gap: 4px; }
.proofbtn { margin-left: 20px; }
.compat { margin-left: 28px; }
.missbtn { margin-left: 26px; }
.views { display: flex; gap: 15px; margin-left: auto; margin-right: 34px; }
.eye { margin-right: 19px; }
.status .zoomval { margin: 0 15px 0 11px; }
.zoom { display: flex; align-items: center; gap: 13px; margin-right: 12px; }
.zoom input { appearance: none; width: 206px; height: 24px; background: linear-gradient(90deg, #555b66 31%, #d8dbe0 31%) center / 100% 2px no-repeat; }
.zoom input::-webkit-slider-thumb { appearance: none; width: 20px; height: 20px; border-radius: 10px; border: 2px solid #555b66; background: #f5f7fa; }

/* taskbar */
.taskbar { display: flex; align-items: center; height: 60px; padding: 0 14px 0 24px; background: linear-gradient(90deg, #222e3d 0 55%, #27364a 68%, #242629 82%, #222); color: #fff; flex: none; }
.flower { width: 34px; height: 34px; margin-left: 46px; }
.seek { display: flex; align-items: center; height: 43px; margin-left: 22px; width: 275px; background: #edeef1; color: #111; font-size: 15px; padding-left: 6px; }
.seek .ie { width: 28px; }
.seek input { flex: 1; min-width: 0; padding-left: 8px; }
.seek button { width: 70px; height: 43px; background: #2387fa; color: #fff; }
.ie { width: 36px; height: 36px; }
.split { width: 4px; height: 36px; margin: 0 14px 0 13px; border: solid #3e4a59; border-width: 0 1px; }
.apps { display: flex; gap: 1px; height: 60px; }
.apps span { width: 74px; display: grid; place-items: center; border-bottom: 4px solid transparent; }
.apps .open { background: linear-gradient(#76b0e0, #76b0e0) center bottom / 62px 4px no-repeat border-box; }
.apps .active { background: #4d5763; border-bottom-color: #76b0e0; }
.weather { display: flex; align-items: center; width: 130px; margin-left: auto; }
.weather svg { width: 34px; height: 34px; }
.overlay { display: grid; align-items: center; width: 84px; padding-left: 13px; white-space: nowrap; }
.overlay span { grid-area: 1 / 1; }
.overlay .temp { font-size: 20px; }
.overlay .mem { width: 72px; text-align: center; }
.tray { display: flex; }
.tray > * { margin: 0 6px; }
.lite { stroke: #fff; }
.ime { width: 24px; }
.qapp { margin-left: 12px; }
.clock { width: 96px; margin-left: 24px; text-align: center; white-space: nowrap; }
.notify { position: relative; width: 36px; height: 44px; margin-left: 29px; padding-top: 9px; }
.notify svg { width: 26px; height: 24px; }
.notify b { position: absolute; right: 0; bottom: 0; width: 20px; height: 20px; background: #e01018; font: 14px/20px "Open Sans", sans-serif; text-align: center; }
.handle { position: absolute; left: 3px; top: 10px; width: 12px; height: 85px; border-radius: 6px; background: linear-gradient(#1f3358 0 40%, #666 45% 80%, #2e7a44 88%); }
```
